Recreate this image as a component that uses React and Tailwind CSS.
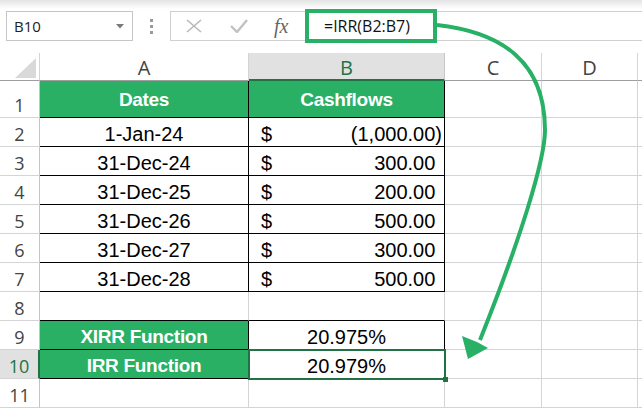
import React from 'react'

const green = 'bg-[#29b064]'

// one sheet row: row header, A, B (passed as children), then C, D and the rest
const Row = ({ h = 'h-[29px]', num, sel, children }) => (
  <div className={`flex ${h}`}>
    <div
      className={`w-[40px] shrink-0 flex items-end justify-center pb-[3px] border-b border-b-[#d4d4d4] font-['Open_Sans'] text-[18px] leading-[18px] ${
        sel ? 'bg-[#e1e1e1] text-[#217346] border-r-2 border-r-[#217346]' : 'text-[#444] border-r border-r-[#c4c4c4]'
      }`}
    >
      {num}
    </div>
    {children}
    <div className="w-[97px] shrink-0 border-r border-r-[#d4d4d4] border-b border-b-[#d4d4d4]" />
    <div className="w-[96px] shrink-0 border-r border-r-[#d4d4d4] border-b border-b-[#d4d4d4]" />
    <div className="flex-1 border-b border-b-[#d4d4d4]" />
  </div>
)

const HeadCell = ({ w, children }) => (
  <div className={`${w} shrink-0 ${green} flex items-end justify-center pb-[7px] border-r border-r-black border-b border-b-black text-white font-bold text-[19px] leading-[20px] tracking-[-0.3px]`}>
    {children}
  </div>
)

const DateCell = ({ children }) => (
  <div className="w-[209px] shrink-0 flex items-end justify-center pb-[2px] border-r border-r-black border-b border-b-black">
    {children}
  </div>
)

const CashCell = ({ v, neg }) => (
  <div className="w-[196px] shrink-0 flex items-end justify-between pb-[2px] pl-[12px] pr-[2px] border-r border-r-black border-b border-b-black">
    <span>$</span>
    <span>
      {neg ? `(${v})` : v}
      {!neg && <span className="invisible">)</span>}
    </span>
  </div>
)

const rows = [
  ['1-Jan-24', '1,000.00', true],
  ['31-Dec-24', '300.00'],
  ['31-Dec-25', '200.00'],
  ['31-Dec-26', '500.00'],
  ['31-Dec-27', '300.00'],
  ['31-Dec-28', '500.00'],
]

export default function App() {
  return (
    <div className="relative w-[642px] h-[409px] overflow-hidden bg-white font-['Liberation_Sans',Arial,sans-serif] text-[20px] leading-[20px] text-black">
      {/* formula bar */}
      <div className="h-[53px] bg-[linear-gradient(to_bottom,#e4e4e4,#ffffff_9px)] flex items-start pt-[11px] font-['Open_Sans',sans-serif]">
        <div className="ml-[6px] w-[127px] h-[30px] shrink-0 border border-[#c6c6c6] bg-white flex items-center justify-between pl-[7px] pr-[8px] text-[15px] text-[#222]">
          <span>B10</span>
          <svg width="8" height="5" viewBox="0 0 8 5"><path d="M0 0h8L4 4.5z" fill="#7a7a7a" /></svg>
        </div>
        <div className="w-[37px] h-[30px] shrink-0 flex flex-col items-center justify-center gap-[3px]">
          <div className="w-[3px] h-[3px] bg-[#9a9a9a]" />
          <div className="w-[3px] h-[3px] bg-[#9a9a9a]" />
          <div className="w-[3px] h-[3px] bg-[#9a9a9a]" />
        </div>
        <div className="w-[135px] h-[30px] shrink-0 border-y border-l border-[#d0d0d0] bg-white flex items-center">
          <svg className="ml-[15px]" width="16" height="14" viewBox="0 0 16 14">
            <path d="M1 1l14 12M15 1L1 13" stroke="#b8b8b8" strokeWidth="1.6" fill="none" />
          </svg>
          <svg className="ml-[28px]" width="18" height="14" viewBox="0 0 18 14">
            <path d="M1 7l6 6L17 1" stroke="#c2c2c2" strokeWidth="2.4" fill="none" />
          </svg>
          <span className="ml-[26px] font-['Liberation_Serif',serif] italic text-[20px] text-[#666] leading-none">fx</span>
        </div>
        <div className="-mt-[2px] w-[132px] h-[34px] shrink-0 border-4 border-[#28b166] bg-white flex items-center pl-[15px] text-[16px] text-[#111]">
          =IRR(B2:B7)
        </div>
        <div className="flex-1 h-[30px] border-y border-[#d0d0d0]" />
      </div>

      {/* column headers */}
      <div className="flex h-[28px] font-['Open_Sans',sans-serif] text-[20px] leading-[20px] text-[#444]">
        <div className="w-[40px] shrink-0 border-r border-r-[#d4d4d4] border-b border-b-[#9e9e9e]">
          <svg width="39" height="27" viewBox="0 0 39 27"><path d="M36 5v20H15z" fill="#d9d9d9" /></svg>
        </div>
        <div className="w-[209px] shrink-0 flex items-end justify-center pb-[2px] border-r border-r-[#d4d4d4] border-b border-b-[#9e9e9e]">A</div>
        <div className="w-[196px] shrink-0 bg-[#e1e1e1] text-[#217346] flex items-end justify-center pb-[1px] border-r border-r-[#c8c8c8] border-b-2 border-b-[#217346]">B</div>
        <div className="w-[97px] shrink-0 flex items-end justify-center pb-[2px] border-r border-r-[#d4d4d4] border-b border-b-[#9e9e9e]">C</div>
        <div className="w-[96px] shrink-0 flex items-end justify-center pb-[2px] border-r border-r-[#d4d4d4] border-b border-b-[#9e9e9e]">D</div>
        <div className="flex-1 border-b border-b-[#9e9e9e]" />
      </div>

      <Row h="h-[37px]" num="1">
        <HeadCell w="w-[209px]">Dates</HeadCell>
        <HeadCell w="w-[196px]">Cashflows</HeadCell>
      </Row>
      {rows.map(([d, v, neg], i) => (
        <Row key={d} num={i + 2}>
          <DateCell>{d}</DateCell>
          <CashCell v={v} neg={neg} />
        </Row>
      ))}
      <Row num="8">
        <div className="w-[209px] shrink-0 border-r border-r-[#d4d4d4] border-b border-b-black" />
        <div className="w-[196px] shrink-0 border-r border-r-[#d4d4d4] border-b border-b-black" />
      </Row>
      <Row num="9">
        <div className={`w-[209px] shrink-0 ${green} flex items-end justify-center pb-[2px] border-r border-r-black border-b border-b-black text-white font-bold text-[19px] tracking-[-0.3px]`}>
          XIRR Function
        </div>
        <div className="w-[196px] shrink-0 flex items-end justify-center pb-[2px] border-r border-r-black border-b border-b-black">20.975%</div>
      </Row>
      <Row num="10" sel>
        <div className={`w-[209px] shrink-0 ${green} flex items-end justify-center pb-[2px] border-r border-r-black border-b border-b-black text-white font-bold text-[19px] tracking-[-0.3px]`}>
          IRR Function
        </div>
        <div className="relative w-[196px] shrink-0 flex items-end justify-center pb-[2px] border-r border-r-black border-b border-b-black">
          20.979%
          <div className="absolute -left-[1px] -top-[1px] w-[198px] h-[31px] border-2 border-[#217346]" />
          <div className="absolute left-[194px] top-[27px] w-[5px] h-[5px] bg-[#217346]" />
        </div>
      </Row>
      <Row num="11">
        <div className="w-[209px] shrink-0 border-r border-r-[#d4d4d4] border-b border-b-[#d4d4d4]" />
        <div className="w-[196px] shrink-0 border-r border-r-[#d4d4d4] border-b border-b-[#d4d4d4]" />
      </Row>

      {/* annotation arrow from the formula to the result */}
      <svg className="absolute inset-0 pointer-events-none" width="642" height="409" viewBox="0 0 642 409">
        <path
          d="M437 25C500 32 545 60 545 130C545 160 520 240 480 340"
          stroke="#27b066"
          strokeWidth="4"
          fill="none"
        />
        <path d="M468 359L462 336L477 342L488 348Z" fill="#27b066" />
      </svg>
    </div>
  )
}
